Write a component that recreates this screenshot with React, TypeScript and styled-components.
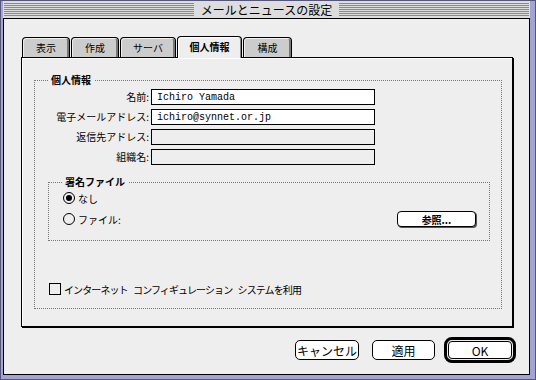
import React from "react";
import styled, { createGlobalStyle } from "styled-components";

const GlobalStyle = createGlobalStyle`
  html, body {
    margin: 0;
    padding: 0;
    background: #eeeeee;
  }
  body {
    font-family: "Noto Sans CJK JP", "Noto Sans", sans-serif;
    font-size: 10px;
    color: #000;
  }
  * {
    box-sizing: border-box;
  }
`;

const Window = styled.div`
    width: 536px;
    height: 380px;
    display: flex;
    flex-direction: column;
    background: #a4a4d4;
    border: 1px solid #555577;
    padding: 0 5px 4px 2px;
`;

const TitleBar = styled.div`
    height: 17px;
    display: flex;
    align-items: flex-start;
    background: #dddddd;
    padding: 0 1px;
`;

const Stripes = styled.div`
    flex: 1;
    height: 13px;
    margin-top: 2px;
    background: repeating-linear-gradient(to bottom, #8a8a8a 0 1px, #dddddd 1px 2px);
`;

const Title = styled.div`
    padding: 0 7px;
    font-size: 12px;
    line-height: 17px;
    white-space: nowrap;
`;

const Content = styled.div`
    flex: 1;
    display: flex;
    flex-direction: column;
    border: 1px solid #000;
    background: #eeeeee;
    padding: 17px 0 0 17px;
`;

const TabRow = styled.div`
    display: flex;
    align-items: flex-end;
    height: 21px;
    padding-left: 1px;
    gap: 1px;
`;

const Tab = styled.div<{ $w: number; $active?: boolean }>`
    position: relative;
    z-index: ${(p) => (p.$active ? 2 : 0)};
    width: ${(p) => p.$w}px;
    height: ${(p) => (p.$active ? 22 : 20)}px;
    margin-bottom: ${(p) => (p.$active ? -1 : 0)}px;
    display: flex;
    align-items: center;
    justify-content: center;
    border: 1px solid #000;
    border-bottom: none;
    border-radius: 4px 4px 0 0;
    background: ${(p) => (p.$active ? "#eeeeee" : "#cccccc")};
    box-shadow: ${(p) =>
        p.$active ? "inset 1px 1px 0 #ffffff, inset -1px 0 0 #888" : "inset 1px 1px 0 #eeeeee, inset -2px 0 0 #777"};
    font-size: 10px;
    font-weight: ${(p) => (p.$active ? 700 : 400)};
    padding-bottom: ${(p) => (p.$active ? 2 : 0)}px;
`;

const Panel = styled.div`
    width: 492px;
    height: 270px;
    border: 1px solid #000;
    background: #eeeeee;
    box-shadow: 1px 1px 0 #000, inset 1px 1px 0 #ffffff;
    padding: 15px 10px 0 12px;
`;

const Group = styled.fieldset<{ $h: number }>`
    margin: 0;
    padding: 0;
    height: ${(p) => p.$h}px;
    border: 1px dotted #777;
    min-width: 0;
    display: flex;
    flex-direction: column;
`;

const Legend = styled.legend`
    margin-left: 13px;
    padding: 0 3px;
    font-size: 10px;
    font-weight: 700;
    line-height: 14px;
`;

const Fields = styled.div`
    margin-top: 2px;
    display: grid;
    grid-template-columns: 114px 224px;
    grid-auto-rows: 16px;
    column-gap: 2px;
    row-gap: 4px;
`;

const FieldLabel = styled.label`
    text-align: right;
    font-size: 10px;
    line-height: 16px;
    white-space: nowrap;
`;

const TextBox = styled.input<{ $disabled?: boolean }>`
    width: 224px;
    height: 16px;
    margin: 0;
    border: 1px solid #000;
    background: ${(p) => (p.$disabled ? "#eeeeee" : "#ffffff")};
    padding: 0 5px;
    font-family: "Liberation Mono", "DejaVu Sans Mono", monospace;
    font-size: 10px;
    color: #000;
    outline: none;
`;

const SigGroup = styled(Group)`
    margin: 10px 11px 0 13px;
`;

const SigBody = styled.div`
    padding: 3px 13px 0 14px;
    display: flex;
    flex-direction: column;
    gap: 7px;
`;

const RadioRow = styled.div`
    display: flex;
    align-items: center;
    gap: 3px;
    height: 12px;
`;

const FileRow = styled.div`
    display: flex;
    align-items: center;
    height: 16px;
`;

const Radio = styled.span<{ $checked?: boolean }>`
    width: 12px;
    height: 12px;
    border: 1px solid #000;
    border-radius: 50%;
    display: flex;
    align-items: center;
    justify-content: center;
    &::after {
        content: "";
        width: 6px;
        height: 6px;
        border-radius: 50%;
        background: ${(p) => (p.$checked ? "#000" : "transparent")};
    }
`;

const SmallButton = styled.div`
    margin-left: auto;
    width: 79px;
    height: 16px;
    border: 1px solid #000;
    border-radius: 4px;
    background: #ffffff;
    box-shadow: 1px 1px 0 #555;
    display: flex;
    align-items: center;
    justify-content: center;
    font-size: 10px;
    font-weight: 700;
`;

const CheckRow = styled.div`
    margin: 42px 0 0 14px;
    display: flex;
    align-items: center;
    gap: 3px;
    height: 12px;
`;

const CheckBox = styled.span`
    width: 12px;
    height: 12px;
    border: 1px solid #000;
`;

const CheckText = styled.span`
    font-size: 10px;
    letter-spacing: -0.9px;
    word-spacing: 4px;
    white-space: nowrap;
`;

const ButtonRow = styled.div`
    margin-top: 10px;
    padding-right: 13px;
    display: flex;
    justify-content: flex-end;
    align-items: center;
    gap: 13px;
`;

const Button = styled.div<{ $w: number }>`
    width: ${(p) => p.$w}px;
    height: 20px;
    border: 1px solid #000;
    border-radius: 5px;
    background: #ffffff;
    display: flex;
    align-items: center;
    justify-content: center;
    font-size: 12px;
`;

const DefaultRing = styled.div`
    margin-left: -4px;
    width: 72px;
    height: 26px;
    border: 3px solid #000;
    border-radius: 8px;
    padding: 1px;
    display: flex;
`;

const DefaultButton = styled(Button)`
    flex: 1;
    height: auto;
    border-radius: 4px;
`;

const fields = [
    { label: "名前:", value: "Ichiro Yamada" },
    { label: "電子メールアドレス:", value: "ichiro@synnet.or.jp" },
    { label: "返信先アドレス:", value: "", disabled: true },
    { label: "組織名:", value: "", disabled: true },
];

const tabs = [
    { name: "表示", w: 48 },
    { name: "作成", w: 48 },
    { name: "サーバ", w: 56 },
    { name: "個人情報", w: 65, active: true },
    { name: "構成", w: 49 },
];

const App: React.FC = () => {
    return (
        <>
            <GlobalStyle />
            <Window>
                <TitleBar>
                    <Stripes />
                    <Title>メールとニュースの設定</Title>
                    <Stripes />
                </TitleBar>
                <Content>
                    <TabRow>
                        {tabs.map((t) => (
                            <Tab key={t.name} $w={t.w} $active={t.active}>
                                {t.name}
                            </Tab>
                        ))}
                    </TabRow>
                    <Panel>
                        <Group $h={236}>
                            <Legend>個人情報</Legend>
                            <Fields>
                                {fields.map((f) => (
                                    <React.Fragment key={f.label}>
                                        <FieldLabel>{f.label}</FieldLabel>
                                        <TextBox
                                            readOnly
                                            defaultValue={f.value}
                                            $disabled={f.disabled}
                                        />
                                    </React.Fragment>
                                ))}
                            </Fields>
                            <SigGroup $h={66}>
                                <Legend>署名ファイル</Legend>
                                <SigBody>
                                    <RadioRow>
                                        <Radio $checked />
                                        なし
                                    </RadioRow>
                                    <FileRow>
                                        <RadioRow>
                                            <Radio />
                                            ファイル:
                                        </RadioRow>
                                        <SmallButton>参照...</SmallButton>
                                    </FileRow>
                                </SigBody>
                            </SigGroup>
                            <CheckRow>
                                <CheckBox />
                                <CheckText>インターネット コンフィギュレーション システムを利用</CheckText>
                            </CheckRow>
                        </Group>
                    </Panel>
                    <ButtonRow>
                        <Button $w={64}>キャンセル</Button>
                        <Button $w={63}>適用</Button>
                        <DefaultRing>
                            <DefaultButton $w={0}>OK</DefaultButton>
                        </DefaultRing>
                    </ButtonRow>
                </Content>
            </Window>
        </>
    );
};

export default App;
